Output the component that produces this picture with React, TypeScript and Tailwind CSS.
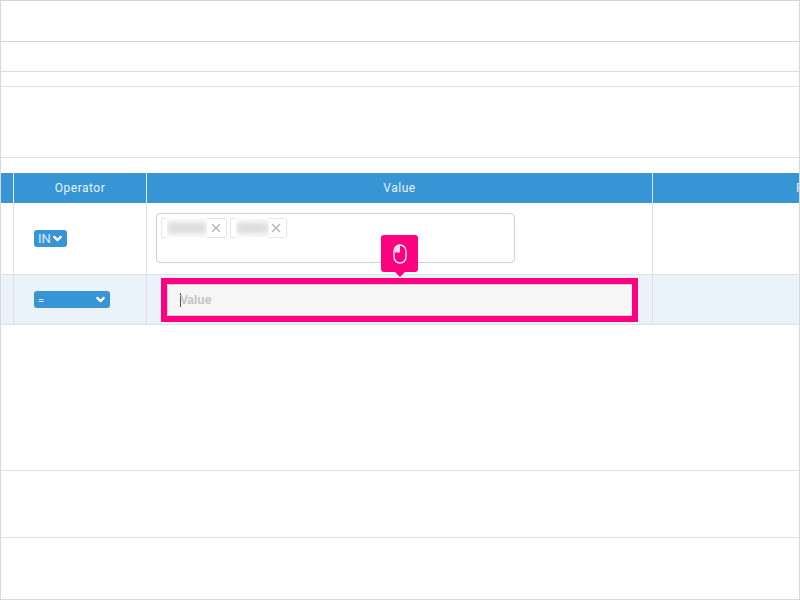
import { ChevronDown, X } from "lucide-react";

function Pill({ label, w, small }: { label: string; w: string; small?: boolean }) {
  return (
    <div className={`${w} h-[17px] bg-[#3795d6] rounded-[3px] flex items-center justify-between text-white pl-1 pr-[3px] ${small ? "text-[11px]" : "text-[13px]"}`}>
      <span className={small ? "text-[#dcecf8] pt-[3px]" : "text-[#dcecf8]"}>{label}</span>
      <ChevronDown size={13} strokeWidth={4} />
    </div>
  );
}

function Tag({ w, blur }: { w: string; blur: string }) {
  return (
    <div className={`${w} h-[20px] border border-[#e6e6e6] rounded-[2px] flex items-center justify-between pl-[5px] pr-[3px]`}>
      <div className={`${blur} h-[20px] bg-white flex items-center overflow-hidden`}>
        <div className="w-full h-[12px] bg-[#dcdcdc] blur-[3px]" />
      </div>
      <X size={14} strokeWidth={3} className="text-[#bdbdbd]" />
    </div>
  );
}

export default function App() {
  return (
    <div className="w-[800px] h-[600px] overflow-hidden bg-white border-l border-r border-b border-[#d8d8d8] font-['Roboto','Liberation_Sans',sans-serif] flex flex-col">
      <div className="h-[41px] shrink-0 border-t border-[#d4d4d4]" />
      <div className="h-[30px] shrink-0 border-t border-[#d4d4d4]" />
      <div className="h-[15px] shrink-0 border-t border-[#dcdcdc]" />
      <div className="h-[71px] shrink-0 border-t border-[#e0e0e0]" />
      <div className="h-[16px] shrink-0 border-t border-[#e0e0e0]" />

      <div className="h-[30px] shrink-0 bg-[#3795d6] flex text-[12px] tracking-[0.5px] text-[#e8f3fb]">
        <div className="w-[13px] shrink-0 border-r border-[#e4eef6]" />
        <div className="w-[133px] shrink-0 border-r border-[#e4eef6] flex items-center justify-center">Operator</div>
        <div className="w-[506px] shrink-0 border-r border-[#d8e4ee] flex items-center justify-center">Value</div>
        <div className="flex-1 flex items-center pl-[143px] whitespace-nowrap">F</div>
      </div>

      <div className="h-[72px] shrink-0 flex border-b border-[#e0e0e0]">
        <div className="w-[13px] shrink-0 border-r border-[#e0e0e0]" />
        <div className="w-[133px] shrink-0 border-r border-[#e0e0e0] pl-5 flex items-center">
          <Pill label="IN" w="w-[33px]" />
        </div>
        <div className="w-[506px] shrink-0 border-r border-[#e0e0e0] pl-[9px] pt-[10px]">
          <div className="w-[359px] h-[50px] border border-[#cfcfcf] rounded-[4px] flex gap-[3px] pl-1 pt-1">
            <Tag w="w-[66px]" blur="w-[40px]" />
            <Tag w="w-[57px]" blur="w-[33px]" />
          </div>
        </div>
        <div className="flex-1" />
      </div>

      <div className="h-[50px] shrink-0 flex bg-[#ebf3fa] border-b border-[#e0e0e0]">
        <div className="w-[13px] shrink-0 border-r border-[#e0e0e0]" />
        <div className="w-[133px] shrink-0 border-r border-[#e0e0e0] pl-5 flex items-center">
          <Pill label="=" w="w-[76px]" small />
        </div>
        <div className="w-[506px] shrink-0 border-r border-[#e0e0e0] pl-5 pt-[9px]">
          <div className="relative w-[466px] h-[32px] bg-[#f6f6f6] border border-[#d2d2d2] rounded-[2px] flex items-center pl-3 text-[12px] font-['Liberation_Sans',sans-serif] text-[#c4c4c4] font-bold">
            <span className="w-px h-[14px] bg-[#555] shrink-0" />
            <span className="-ml-px">Value</span>
            <div className="absolute -top-[7px] -left-[7px] -bottom-[7px] -right-[6px] border-[6px] border-[#ff0080]" />
            <div className="absolute left-[213px] -top-[50px] w-[37px] h-[37px] bg-[#ff0080] rounded-[3px] flex items-center justify-center">
              <svg width="14" height="20" viewBox="0 0 14 20" fill="none">
                <rect x="1" y="1" width="12" height="18" rx="6" stroke="#fff" strokeWidth="1.3" />
                <path d="M1.5 8.5V6.5A5.5 5.5 0 0 1 7 1.5V8.5Z" fill="#ffd6ea" />
              </svg>
              <div className="absolute left-1/2 -bottom-[5px] -ml-[5px] w-0 h-0 border-l-[5px] border-r-[5px] border-t-[5px] border-l-transparent border-r-transparent border-t-[#ff0080]" />
            </div>
          </div>
        </div>
        <div className="flex-1" />
      </div>

      <div className="h-[146px] shrink-0 border-b border-[#e0e0e0]" />
      <div className="h-[67px] shrink-0 border-b border-[#e0e0e0]" />
      <div className="flex-1" />
    </div>
  );
}
